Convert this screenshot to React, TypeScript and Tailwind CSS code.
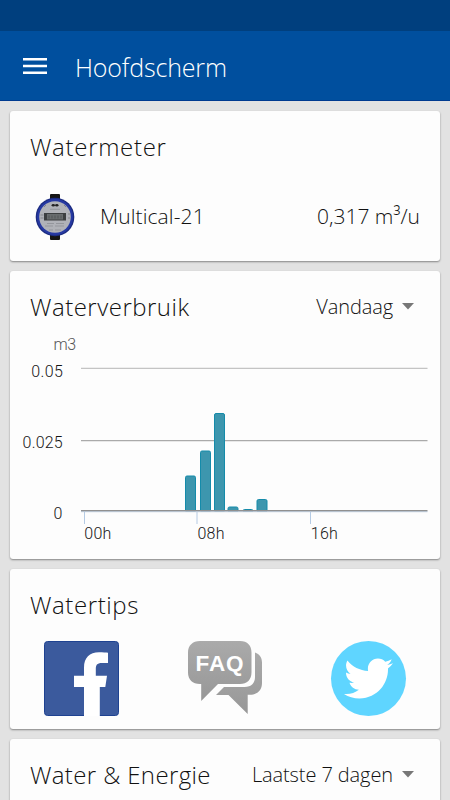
import type { ReactNode } from 'react';
import { FaTwitter } from 'react-icons/fa';

const light = "font-['Open_Sans','Noto_Sans',sans-serif] font-light";

function Card({ className, children }: { className: string; children: ReactNode }) {
  return (
    <section className={`mx-[10px] shrink-0 rounded-[3px] bg-[#fdfdfd] shadow-[0_1px_2px_rgba(0,0,0,0.42)] ${className}`}>
      {children}
    </section>
  );
}

function Title({ children, spacing }: { children: ReactNode; spacing: string }) {
  return <h2 className={`${light} whitespace-nowrap text-[24px] leading-[32px] text-[#111] ${spacing}`}>{children}</h2>;
}

function Period({ children, spacing }: { children: ReactNode; spacing: string }) {
  return (
    <button className="flex items-center gap-[9px]">
      <span className={`${light} whitespace-nowrap text-[20px] leading-[28px] text-[#111] ${spacing}`}>{children}</span>
      <svg width="12" height="7" viewBox="0 0 12 7" className="mb-[2px]">
        <path d="M0 0h12L6 6.5z" fill="#777" />
      </svg>
    </button>
  );
}

function MeterImage() {
  return (
    <svg width="40" height="48" viewBox="0 0 40 48">
      <rect x="15" y="1" width="10" height="8" rx="1" fill="#151515" />
      <rect x="15" y="39" width="10" height="8" rx="1" fill="#151515" />
      <circle cx="20" cy="24" r="19.3" fill="#1c2c80" />
      <circle cx="20" cy="24" r="18" fill="#2639a3" />
      <circle cx="20" cy="24" r="15.8" fill="#b0b2b8" />
      <ellipse cx="18.3" cy="12.2" rx="1.7" ry="1.3" fill="#222" />
      <ellipse cx="21.8" cy="12.2" rx="1.7" ry="1.3" fill="#222" />
      <path d="M15 16.3h10M12 30.5h7M21 30.5h8M10 33h8M20 33h9M14 37h4M20 37h6" stroke="#94969c" strokeWidth="1" />
      <path d="M5.5 22h3M5.5 25h3M33 21h2M33 25h2M9 14l2-2M29 12l2 2" stroke="#85878d" />
      <rect x="9" y="20" width="22" height="7.500" fill="#3c3f41" />
      <rect x="12" y="21" width="16" height="5.500" fill="#686c6e" />
      <path d="M14 22.500v3M17 22.500v3M20 22.500v3M23 22.500v3M26 22.500v3" stroke="#515557" strokeWidth="1" />
    </svg>
  );
}

const bars = [
  { x: 175, y: 125.5, w: 11 },
  { x: 190, y: 100.5, w: 11 },
  { x: 204, y: 63, w: 11 },
  { x: 217.5, y: 156.5, w: 11 },
  { x: 232.5, y: 160, w: 11 },
  { x: 246.5, y: 149, w: 11 },
];

function Chart() {
  return (
    <svg width="430" height="220" viewBox="0 0 430 220" className="block overflow-visible font-[Roboto,sans-serif] font-light">
      <text x="43.5" y="0" fontSize="16" fill="#555" textLength="22.5">m3</text>
      <path d="M71 18.4H417.5" stroke="#c4c4c4" strokeWidth="1.4" />
      <path d="M71 90.6H417.5" stroke="#aaa" strokeWidth="1.3" />
      {bars.map((b) => (
        <path
          key={b.x}
          d={`M${b.x + 0.5} 161V${Math.min(b.y + 2, 161)}q0-1.5 1.5-1.5h${b.w - 4}q1.5 0 1.5 1.5V161z`}
          fill="#3d96ae"
          stroke="#158baa"
        />
      ))}
      <path d="M71 161.700H417.500" stroke="#b9cade" strokeWidth="1" />
      <path d="M71 160.600H417.500" stroke="#909090" strokeWidth="1.3" />
      <path d="M74.500 162v12M187 162v12M300.500 162v12" stroke="#b5cbe4" />
      <g fontSize="16" fill="#151515">
        <text x="21.3" y="26.500" textLength="31.500">0.05</text>
        <text x="12.6" y="97.800" textLength="40">0.025</text>
        <text x="43.5" y="169">0</text>
        <text x="74.3" y="188.700" textLength="27">00h</text>
        <text x="187.5" y="188.700" textLength="27">08h</text>
        <text x="300.8" y="188.700" textLength="27">16h</text>
      </g>
    </svg>
  );
}

function FacebookIcon() {
  return (
    <svg width="75" height="75" viewBox="0 0 75 75">
      <rect x=".5" y=".5" width="74" height="74" rx="3" fill="#3b5a9d" stroke="#1e4291" />
      <path d="M40 75V46H30V34.800h10V26.500C40 17 45.500 11.300 55 11.300c4 0 7 .2 9 .5V22h-6c-5.200 0-6.200 2.300-6.200 6v6.800H63L61.300 46h-5.500v29z" fill="#fff" />
    </svg>
  );
}

function FaqIcon() {
  return (
    <svg width="75" height="74" viewBox="0 0 75 74">
      <defs>
        <linearGradient id="faq" x2="0" y2="1">
          <stop stopColor="#aaa" />
          <stop offset="1" stopColor="#979797" />
        </linearGradient>
      </defs>
      <path d="M67 11.500c4.500 1.600 7 5 7 10V42c0 7-4.500 11.800-12 11.800h-2.300V73L40.500 54H28l8-8h20.500C63.500 46 67 42 67 36z" fill="url(#faq)" />
      <path d="M12 0h40c7.500 0 11.500 4.500 11.500 11.500v20c0 7-4.500 11.500-11.500 11.500H30L13.200 60V43H12C4.500 43 0 38.500 0 31.500v-20C0 4.500 4.500 0 12 0z" fill="url(#faq)" />
      <text x="7.500" y="30" fontSize="22.500" textLength="48" fill="#fff" className="font-['Liberation_Sans',sans-serif] font-bold">FAQ</text>
    </svg>
  );
}

export default function App() {
  return (
    <div className="flex h-[800px] w-[450px] flex-col overflow-hidden bg-[#e2e2e2]">
      <div className="h-[31px] shrink-0 bg-[#003f7e]" />
      <header className="flex h-[70px] shrink-0 items-center bg-[#004f9e] pl-[23px] shadow-[inset_0_-1px_#003b90]">
        <svg width="24" height="16" viewBox="0 0 24 16">
          <path d="M0 1.300h24M0 8h24M0 14.700h24" stroke="#fff" strokeWidth="2.500" />
        </svg>
        <h1 className={`${light} ml-[28px] whitespace-nowrap pt-px text-[25px] leading-[34px] tracking-[-0.15px] text-white`}>Hoofdscherm</h1>
      </header>
      <main className="flex flex-col gap-[10px] pt-[10px]">
        <Card className="h-[150px] pt-[20px]">
          <div className="px-5"><Title spacing="tracking-[0.7px]">Watermeter</Title></div>
          <div className="mt-[29px] flex h-[50px] items-center pl-[25px] pr-5">
            <MeterImage />
            <span className={`${light} ml-[25px] whitespace-nowrap text-[21px] tracking-[0.1px] text-[#111]`}>Multical-21</span>
            <span className={`${light} ml-auto whitespace-nowrap text-[21px] text-[#111]`}>0,317 m³/u</span>
          </div>
        </Card>
        <Card className="h-[288px] pt-[20px]">
          <div className="flex items-center justify-between pl-5 pr-[26px]">
            <Title spacing="tracking-[0.5px]">Waterverbruik</Title>
            <Period spacing="tracking-[-0.1px]">Vandaag</Period>
          </div>
          <div className="mt-[27px]"><Chart /></div>
        </Card>
        <Card className="h-[160px] pt-[20px]">
          <div className="px-5"><Title spacing="tracking-[0.6px]">Watertips</Title></div>
          <div className="mt-[20px] flex justify-between pl-[34px] pr-[34px]">
            <FacebookIcon />
            <FaqIcon />
            <div className="flex h-[75px] w-[75px] items-center justify-center rounded-full bg-[#5fd5ff] pr-px">
              <FaTwitter size={49} color="white" />
            </div>
          </div>
        </Card>
        <Card className="h-[150px] pt-[20px]">
          <div className="flex items-center justify-between pl-5 pr-[26px]">
            <Title spacing="tracking-[0.37px]">Water &amp; Energie</Title>
            <Period spacing="tracking-[-0.1px]">Laatste 7 dagen</Period>
          </div>
        </Card>
      </main>
    </div>
  );
}
